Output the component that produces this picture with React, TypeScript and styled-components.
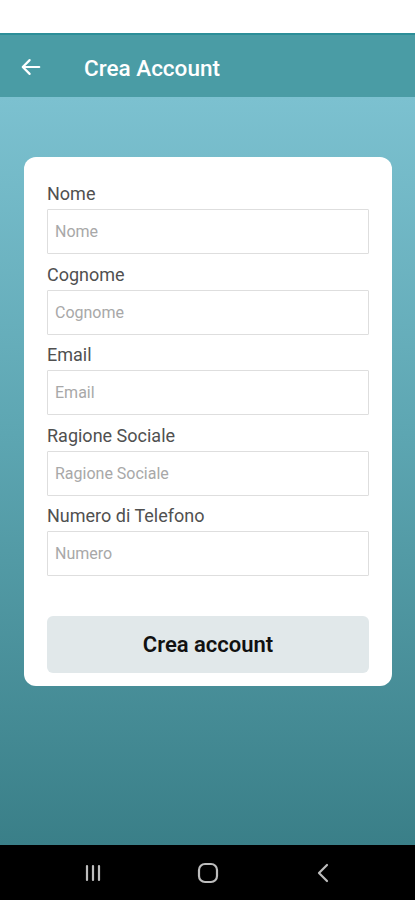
import React from 'react';
import styled, { createGlobalStyle } from 'styled-components';

const GlobalStyle = createGlobalStyle`
  html, body {
    margin: 0;
    padding: 0;
  }
  body {
    font-family: Roboto, "Liberation Sans", Arial, sans-serif;
  }
  * {
    box-sizing: border-box;
  }
`;

const fields = [
  { label: 'Nome', placeholder: 'Nome' },
  { label: 'Cognome', placeholder: 'Cognome' },
  { label: 'Email', placeholder: 'Email' },
  { label: 'Ragione Sociale', placeholder: 'Ragione Sociale' },
  { label: 'Numero di Telefono', placeholder: 'Numero' },
];

const App = () => {
  return (
    <>
      <GlobalStyle />
      <Screen>
        <StatusBar />
        <Header>
          <BackButton aria-label="Indietro">
            <svg width="22" height="22" viewBox="0 0 24 24" fill="none" stroke="#fff" strokeWidth="2.4" strokeLinecap="round" strokeLinejoin="round">
              <path d="M21 12H3.5" />
              <path d="M10.5 4.5L3 12l7.5 7.5" />
            </svg>
          </BackButton>
          <Title>Crea Account</Title>
        </Header>
        <Main>
          <Card>
            {fields.map((f, i) => (
              <Field key={f.label} $first={i === 0}>
                <Label>{f.label}</Label>
                <Input placeholder={f.placeholder} />
              </Field>
            ))}
            <SubmitButton>Crea account</SubmitButton>
          </Card>
        </Main>
        <NavBar>
          <NavIcon>
            <svg width="20" height="18" viewBox="0 0 20 18" fill="none" stroke="#bdbdbd" strokeWidth="2.2" strokeLinecap="round">
              <path d="M4 2v14M10 2v14M16 2v14" />
            </svg>
          </NavIcon>
          <NavIcon>
            <svg width="22" height="22" viewBox="0 0 22 22" fill="none" stroke="#bdbdbd" strokeWidth="2.2">
              <rect x="2" y="2" width="18" height="18" rx="6" />
            </svg>
          </NavIcon>
          <NavIcon>
            <svg width="14" height="20" viewBox="0 0 14 20" fill="none" stroke="#bdbdbd" strokeWidth="2.2" strokeLinecap="round" strokeLinejoin="round">
              <path d="M11 2L3 10l8 8" />
            </svg>
          </NavIcon>
        </NavBar>
      </Screen>
    </>
  );
};

export default App;

const Screen = styled.div`
  display: flex;
  flex-direction: column;
  width: 415px;
  height: 900px;
  overflow: hidden;
`;

const StatusBar = styled.div`
  height: 35px;
  background: #ffffff;
  border-bottom: 2px solid #2c8e98;
  flex-shrink: 0;
`;

const Header = styled.div`
  height: 62px;
  flex-shrink: 0;
  background: #4a9ca5;
  display: flex;
  align-items: center;
  padding: 4px 0 0 19px;
  gap: 41px;
`;

const BackButton = styled.div`
  width: 24px;
  height: 24px;
  display: flex;
  align-items: center;
  justify-content: center;
  margin-top: -2px;
`;

const Title = styled.div`
  color: #ffffff;
  font-size: 22.5px;
  font-weight: 500;
`;

const Main = styled.div`
  flex: 1;
  background: linear-gradient(180deg, #7cc1d0 0%, #5da6b2 45%, #3a7f88 100%);
  padding: 60px 23px 0 24px;
`;

const Card = styled.div`
  background: #ffffff;
  border-radius: 12px;
  padding: 27px 23px 13px 23px;
  display: flex;
  flex-direction: column;
`;

const Field = styled.div<{ $first?: boolean }>`
  display: flex;
  flex-direction: column;
  margin-top: ${(p) => (p.$first ? '0' : '10.5px')};
`;

const Label = styled.label`
  font-size: 18px;
  line-height: 20px;
  color: #505050;
  margin-bottom: 5px;
`;

const Input = styled.input`
  height: 45px;
  width: 100%;
  border: 1.5px solid #dedede;
  border-radius: 1px;
  padding: 0 7px;
  font-family: Roboto, "Liberation Sans", Arial, sans-serif;
  font-size: 16px;
  color: #333;
  outline: none;

  &::placeholder {
    color: #a8a8a8;
  }
`;

const SubmitButton = styled.button`
  margin-top: 40px;
  height: 57px;
  width: 100%;
  border: none;
  border-radius: 6px;
  background: #e1e8ea;
  color: #111111;
  font-family: Roboto, "Liberation Sans", Arial, sans-serif;
  font-size: 22px;
  font-weight: 600;
`;

const NavBar = styled.div`
  height: 55px;
  flex-shrink: 0;
  background: #000000;
  display: grid;
  grid-template-columns: 1fr 1fr 1fr;
  align-items: center;
  justify-items: center;
  padding: 0 35px;
`;

const NavIcon = styled.div`
  display: flex;
  align-items: center;
  justify-content: center;
`;
